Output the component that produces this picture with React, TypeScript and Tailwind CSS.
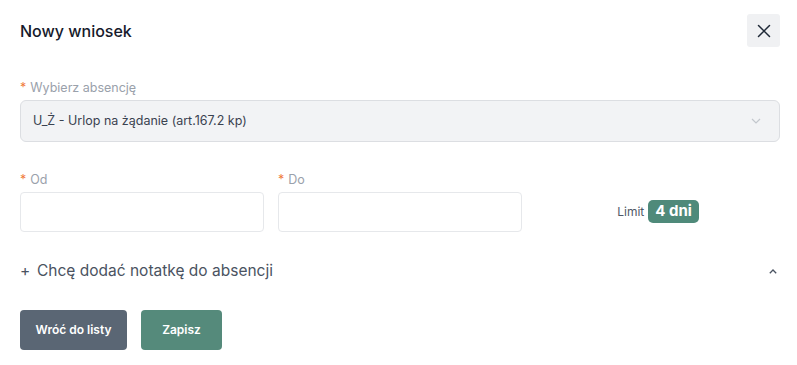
import React from "react";

export default function App() {
  return (
    <div
      className="w-[797px] h-[365px] bg-white pl-[20px] pr-[17px] overflow-hidden"
      style={{ fontFamily: "Inter, 'Noto Sans', sans-serif" }}
    >
      <div className="flex items-center justify-between pt-[14px] h-[47px]">
        <h1 className="text-[16px] font-medium text-[#161a2b] leading-none">Nowy wniosek</h1>
        <button className="w-[33px] h-[33px] rounded-[3px] bg-[#f0f1f3] flex items-center justify-center">
          <svg width="14" height="14" viewBox="0 0 14 14" fill="none" stroke="#1f2937" strokeWidth="1.5" strokeLinecap="round">
            <path d="M1.5 1.5 L12.5 12.5 M12.5 1.5 L1.5 12.5" />
          </svg>
        </button>
      </div>

      <div className="mt-[32px] h-[21px] text-[12.5px] leading-[18px] text-[#9aa1ab]">
        <span className="text-[#f07a3a] mr-[4px]">*</span>Wybierz absencję
      </div>
      <div className="h-[42px] rounded-[6px] border border-[#dcdee2] bg-[#f2f3f5] flex items-center justify-between pl-[12px] pr-[18px]">
        <span className="text-[12.5px] text-[#3a4250]">U_Ż - Urlop na żądanie (art.167.2 kp)</span>
        <svg width="10" height="6" viewBox="0 0 10 6" fill="none" stroke="#c3c7cd" strokeWidth="1.2">
          <path d="M1 1 L5 5 L9 1" />
        </svg>
      </div>

      <div className="grid grid-cols-[244px_244px_1fr] gap-x-[14px] mt-[29px]">
        <div className="flex flex-col">
          <div className="h-[21px] text-[12.5px] leading-[18px] text-[#9aa1ab]">
            <span className="text-[#f07a3a] mr-[4px]">*</span>Od
          </div>
          <div className="h-[40px] rounded-[4px] border border-[#e6e8eb] bg-white" />
        </div>
        <div className="flex flex-col">
          <div className="h-[21px] text-[12.5px] leading-[18px] text-[#9aa1ab]">
            <span className="text-[#f07a3a] mr-[4px]">*</span>Do
          </div>
          <div className="h-[40px] rounded-[4px] border border-[#e6e8eb] bg-white" />
        </div>
        <div className="flex items-end justify-center pb-[9px]">
          <div className="flex items-center gap-[4px]">
            <span className="text-[12px] text-[#4f5866]">Limit</span>
            <span className="h-[23px] px-[7px] rounded-[5px] bg-[#4f8a7a] text-white text-[15px] font-bold flex items-center">4 dni</span>
          </div>
        </div>
      </div>

      <div className="mt-[28px] h-[22px] flex items-center justify-between">
        <div className="flex items-center text-[15.5px] text-[#4a5361]">
          <span className="w-[17px]">+</span>
          <span>Chcę dodać notatkę do absencji</span>
        </div>
        <svg className="mr-[3px]" width="8" height="5" viewBox="0 0 8 5" fill="none" stroke="#4a5361" strokeWidth="1.3">
          <path d="M0.8 4.2 L4 1 L7.2 4.2" />
        </svg>
      </div>

      <div className="mt-[28px] flex gap-[14px]">
        <button className="w-[107px] h-[40px] rounded-[4px] bg-[#5a6674] text-white text-[12px] font-semibold">Wróć do listy</button>
        <button className="w-[81px] h-[40px] rounded-[4px] bg-[#558a7b] text-white text-[12px] font-semibold">Zapisz</button>
      </div>
    </div>
  );
}
